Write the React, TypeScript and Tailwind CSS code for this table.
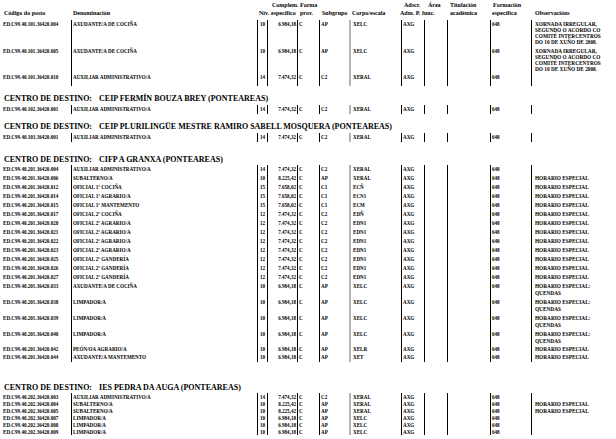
import React from "react";

type Row = {
  code: string;
  den: string;
  niv: string;
  comp: string;
  sub: string;
  corpo: string;
  obs?: string[];
  h: string;
};

const XORNADA = [
  "XORNADA IRREGULAR,",
  "SEGUNDO O ACORDO CO",
  "COMITÉ INTERCENTROS",
  "DO 10 DE XUÑO DE 2008.",
];
const HE = ["HORARIO ESPECIAL"];
const HEQ = ["HORARIO ESPECIAL:", "QUENDAS"];

const aux = (code: string, h: string): Row => ({
  code,
  den: "AUXILIAR ADMINISTRATIVO/A",
  niv: "14",
  comp: "7.474,32",
  sub: "C2",
  corpo: "XERAL",
  h,
});

const sec1: Row[] = [
  { code: "ED.C99.40.101.36420.004", den: "AXUDANTE/A DE COCIÑA", niv: "10", comp: "6.984,18", sub: "AP", corpo: "XELC", obs: XORNADA, h: "h-[27px]" },
  { code: "ED.C99.40.101.36420.005", den: "AXUDANTE/A DE COCIÑA", niv: "10", comp: "6.984,18", sub: "AP", corpo: "XELC", obs: XORNADA, h: "h-[26px]" },
  aux("ED.C99.40.101.36420.010", "h-[13px]"),
];

const of2agr = (n: string): Row => ({ code: "ED.C99.40.201.36420." + n, den: "OFICIAL 2ª AGRARIO/A", niv: "12", comp: "7.474,32", sub: "C2", corpo: "EDN1", obs: HE, h: "h-[9px]" });
const of2gan = (n: string): Row => ({ code: "ED.C99.40.201.36420." + n, den: "OFICIAL 2ª GANDERÍA", niv: "12", comp: "7.474,32", sub: "C2", corpo: "EDN1", obs: HE, h: "h-[9px]" });
const limp = (c: string, obs: string[] | undefined, h: string): Row => ({ code: c, den: "LIMPADOR/A", niv: "10", comp: "6.984,18", sub: "AP", corpo: "XELC", obs, h });

const cifp: Row[] = [
  aux("ED.C99.40.201.36420.004", "h-[9px]"),
  { code: "ED.C99.40.201.36420.006", den: "SUBALTERNO/A", niv: "10", comp: "8.225,42", sub: "AP", corpo: "XERAL", obs: HE, h: "h-[9px]" },
  { code: "ED.C99.40.201.36420.012", den: "OFICIAL 1ª COCIÑA", niv: "15", comp: "7.658,02", sub: "C1", corpo: "ECÑ", obs: HE, h: "h-[9px]" },
  { code: "ED.C99.40.201.36420.014", den: "OFICIAL 1ª AGRARIO/A", niv: "15", comp: "7.658,02", sub: "C1", corpo: "ECN1", obs: HE, h: "h-[9px]" },
  { code: "ED.C99.40.201.36420.015", den: "OFICIAL 1ª MANTEMENTO", niv: "15", comp: "7.658,02", sub: "C1", corpo: "ECM", obs: HE, h: "h-[9px]" },
  { code: "ED.C99.40.201.36420.017", den: "OFICIAL 2ª COCIÑA", niv: "12", comp: "7.474,32", sub: "C2", corpo: "EDÑ", obs: HE, h: "h-[9px]" },
  of2agr("020"),
  of2agr("021"),
  of2agr("022"),
  of2agr("023"),
  of2gan("025"),
  of2gan("026"),
  of2gan("027"),
  { code: "ED.C99.40.201.36420.033", den: "AXUDANTE/A DE COCIÑA", niv: "10", comp: "6.984,18", sub: "AP", corpo: "XELC", obs: HEQ, h: "h-[16px]" },
  limp("ED.C99.40.201.36420.038", HEQ, "h-[16px]"),
  limp("ED.C99.40.201.36420.039", HEQ, "h-[16px]"),
  limp("ED.C99.40.201.36420.040", HEQ, "h-[15px]"),
  { code: "ED.C99.40.201.36420.042", den: "PEÓN/OA AGRARIO/A", niv: "10", comp: "6.984,18", sub: "AP", corpo: "XELR", obs: HE, h: "h-[8px]" },
  { code: "ED.C99.40.201.36420.044", den: "AXUDANTE/A MANTEMENTO", niv: "10", comp: "6.984,18", sub: "AP", corpo: "XET", obs: HE, h: "h-[9px]" },
];

const ies: Row[] = [
  aux("ED.C99.40.202.36420.003", "h-[7px]"),
  { code: "ED.C99.40.202.36420.004", den: "SUBALTERNO/A", niv: "10", comp: "8.225,42", sub: "AP", corpo: "XERAL", obs: HE, h: "h-[7px]" },
  { code: "ED.C99.40.202.36420.005", den: "SUBALTERNO/A", niv: "10", comp: "8.225,42", sub: "AP", corpo: "XERAL", obs: HE, h: "h-[7px]" },
  limp("ED.C99.40.202.36420.007", undefined, "h-[7px]"),
  limp("ED.C99.40.202.36420.008", undefined, "h-[7px]"),
  limp("ED.C99.40.202.36420.009", undefined, "h-[7px]"),
];

function DataRow({ r, obsLeading = "leading-[6px]" }: { r: Row; obsLeading?: string }) {
  return (
    <div className={`flex ${r.h} text-[5.1px] font-bold leading-[6px] whitespace-nowrap`}>
      <div className="w-[71px] shrink-0 pl-[3px] pt-px">{r.code}</div>
      <div className="w-[186px] shrink-0 border-l border-black pl-px pt-px">{r.den}</div>
      <div className="w-[10px] shrink-0 border-l border-black pt-px text-center">{r.niv}</div>
      <div className="w-[30px] shrink-0 border-l border-black pt-px pr-px text-right">{r.comp}</div>
      <div className="w-[22px] shrink-0 border-l border-black pl-px pt-px">C</div>
      <div className="w-[30px] shrink-0 border-l border-black pl-px pt-px">{r.sub}</div>
      <div className="w-[52px] shrink-0 border-l-2 border-[#b4b4b4] pl-[2px] pt-px">{r.corpo}</div>
      <div className="w-[23px] shrink-0 border-l border-black pl-px pt-px">AXG</div>
      <div className="w-[23px] shrink-0 border-l border-black" />
      <div className="w-[43px] shrink-0 border-l border-black" />
      <div className="w-[41px] shrink-0 border-l border-black pl-px pt-px">648</div>
      <div className={`flex-1 border-l border-black pl-[3px] pt-px text-[5.3px] ${obsLeading}`}>
        {r.obs?.map((l) => (
          <div key={l}>{l}</div>
        ))}
      </div>
    </div>
  );
}

function Heading({ name, mt }: { name: string; mt: string }) {
  return (
    <div className={`${mt} h-[10px] pl-[4px] text-[8px] font-bold leading-[10px] whitespace-nowrap`}>
      CENTRO DE DESTINO:<span className="ml-[7px]">{name}</span>
    </div>
  );
}

function Header() {
  return (
    <div className="flex h-[20px] pt-px text-[6px] font-bold leading-[8px] whitespace-nowrap">
      <div className="w-[71px] shrink-0 pl-[4px] pt-[8px]">Código do posto</div>
      <div className="w-[186px] shrink-0 pl-[2px] pt-[8px]">Denominación</div>
      <div className="w-[10px] shrink-0 pl-[2px] pt-[8px]">Nív.</div>
      <div className="w-[30px] shrink-0">
        <div className="pl-[5px]">Complem.</div>
        <div className="pl-[4px]">específico</div>
      </div>
      <div className="w-[22px] shrink-0 pl-[3px]">
        <div>Forma</div>
        <div>prov.</div>
      </div>
      <div className="w-[30px] shrink-0 pl-[3px] pt-[8px]">Subgrupo</div>
      <div className="w-[52px] shrink-0 pl-[3px] pt-[8px]">Corpo/escala</div>
      <div className="w-[23px] shrink-0">
        <div className="pl-[3px]">Adscr.</div>
        <div className="-ml-px">Adm. P.</div>
      </div>
      <div className="w-[23px] shrink-0">
        <div className="pl-[4px]">Área</div>
        <div className="-ml-[2px]">func.</div>
      </div>
      <div className="w-[43px] shrink-0 pl-[3px]">
        <div>Titulación</div>
        <div>académica</div>
      </div>
      <div className="w-[41px] shrink-0">
        <div className="pl-[3px]">Formación</div>
        <div className="pl-[2px]">específica</div>
      </div>
      <div className="flex-1 pl-[4px] pt-[8px]">Observacións</div>
    </div>
  );
}

export default function App() {
  return (
    <div className="w-[616px] h-[439px] overflow-hidden bg-white text-black font-['Liberation_Serif','Times_New_Roman',serif]">
      <Header />
      {sec1.map((r) => (
        <DataRow key={r.code} r={r} />
      ))}

      <Heading mt="mt-[8px]" name="CEIP FERMÍN BOUZA BREY (PONTEAREAS)" />
      <div className="mt-px">
        <DataRow r={aux("ED.C99.40.102.36420.001", "h-[9px]")} />
      </div>

      <Heading mt="mt-[8px]" name="CEIP PLURILINGÜE MESTRE RAMIRO SABELL MOSQUERA (PONTEAREAS)" />
      <div className="mt-px">
        <DataRow r={aux("ED.C99.40.103.36420.001", "h-[9px]")} />
      </div>

      <Heading mt="mt-[13px]" name="CIFP A GRANXA (PONTEAREAS)" />
      {cifp.map((r) => (
        <DataRow key={r.code} r={r} obsLeading="leading-[7px]" />
      ))}

      <Heading mt="mt-[21px]" name="IES PEDRA DA AUGA (PONTEAREAS)" />
      {ies.map((r) => (
        <DataRow key={r.code} r={r} />
      ))}
    </div>
  );
}
